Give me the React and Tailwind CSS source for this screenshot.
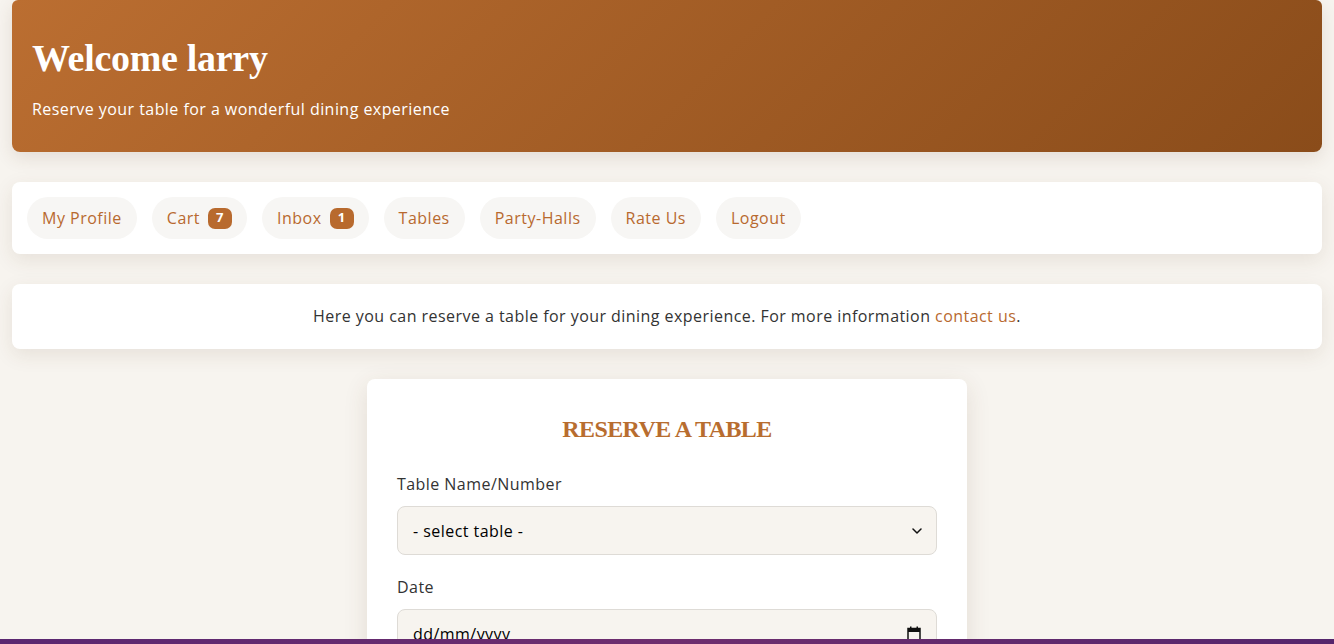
import React from 'react';

const NAV = [
  { label: 'My Profile' },
  { label: 'Cart', badge: 7 },
  { label: 'Inbox', badge: 1 },
  { label: 'Tables' },
  { label: 'Party-Halls' },
  { label: 'Rate Us' },
  { label: 'Logout' },
];

const sans = { fontFamily: '"Open Sans", "Liberation Sans", sans-serif' };
const serif = { fontFamily: '"Liberation Serif", "DejaVu Serif", serif' };

function CalendarIcon() {
  return (
    <svg width="14" height="16" viewBox="0 0 14 16" fill="none">
      <rect x="1" y="2.5" width="12" height="12.5" stroke="#111" strokeWidth="1.5" />
      <rect x="1" y="2.5" width="12" height="3.5" fill="#111" />
      <rect x="3" y="0.5" width="1.5" height="3" fill="#111" />
      <rect x="9.5" y="0.5" width="1.5" height="3" fill="#111" />
    </svg>
  );
}

export default function App() {
  return (
    <div className="min-h-screen bg-[#f7f4ef] px-3 pb-10 tracking-[0.45px]" style={sans}>
      <div className="flex flex-col gap-[30px]">
        {/* Welcome banner */}
        <header className="rounded-b-lg rounded-t-md bg-linear-135 from-[#bb6e31] to-[#8a4c1a] px-5 pt-[36px] pb-[31px] shadow-[0_6px_18px_rgba(90,60,30,0.12)]">
          <h1 className="text-[38px] leading-[45px] font-bold tracking-[-0.3px] text-white" style={serif}>
            Welcome larry
          </h1>
          <p className="mt-[16px] text-[16px] leading-6 text-white">
            Reserve your table for a wonderful dining experience
          </p>
        </header>

        {/* Navigation */}
        <nav className="flex flex-wrap gap-[15px] rounded-lg bg-white p-[15px] shadow-[0_6px_20px_rgba(90,60,30,0.10)]">
          {NAV.map((item) => (
            <button
              key={item.label}
              type="button"
              className="flex h-[42px] items-center rounded-full bg-[#f7f6f4] px-[15px] text-[16px] tracking-[0.5px] text-[#b8692f]"
              style={sans}
            >
              {item.label}
              {item.badge && (
                <span className="ml-2 flex h-[21px] min-w-[24px] items-center justify-center rounded-[7px] bg-[#b86a2e] px-1.5 text-[13px] font-bold text-white">
                  {item.badge}
                </span>
              )}
            </button>
          ))}
        </nav>

        {/* Info */}
        <div className="rounded-lg bg-white px-5 py-[20px] text-center text-[16px] leading-[25px] text-[#333] shadow-[0_6px_20px_rgba(90,60,30,0.10)]">
          Here you can reserve a table for your dining experience. For more information{' '}
          <a href="#" className="text-[#b8692f]">contact us</a>.
        </div>

        {/* Reservation form */}
        <div className="mx-auto w-[600px] rounded-lg bg-white p-[30px] shadow-[0_6px_24px_rgba(90,60,30,0.12)]">
          <h2 className="text-center text-[24px] leading-[40px] font-bold uppercase tracking-[-0.6px] text-[#b86d2f]" style={serif}>
            Reserve a Table
          </h2>
          <label className="mt-[23px] block text-[16px] leading-6 font-medium text-[#333]">
            Table Name/Number
          </label>
          <div className="relative mt-[10px]">
            <select
              className="block h-[49px] w-full appearance-none rounded-lg border border-[#dedbd6] bg-[#f7f4ef] px-[15px] text-[16px] tracking-[0.45px] text-black"
              defaultValue=""
              style={sans}
            >
              <option value="">- select table -</option>
              <option>Table 1</option>
              <option>Table 2</option>
            </select>
            <svg
              className="pointer-events-none absolute right-[15px] top-1/2 -translate-y-1/2"
              width="10"
              height="6"
              viewBox="0 0 10 6"
              fill="none"
            >
              <path d="M1 1l4 4 4-4" stroke="#111" strokeWidth="1.5" strokeLinecap="round" strokeLinejoin="round" />
            </svg>
          </div>
          <label className="mt-[20px] block text-[16px] leading-6 font-medium text-[#333]">
            Date
          </label>
          <div className="mt-[10px] flex h-[49px] items-center justify-between rounded-lg border border-[#dedbd6] bg-[#f7f4ef] px-[15px] text-[16px] text-black">
            <span>dd/mm/yyyy</span>
            <CalendarIcon />
          </div>
          <label className="mt-[20px] block text-[16px] leading-6 font-medium text-[#333]">
            Time
          </label>
          <div className="mt-[10px] h-[49px] rounded-lg border border-[#dedbd6] bg-[#f7f4ef]" />
        </div>
      </div>

      {/* Footer strip */}
      <div className="fixed inset-x-0 bottom-0 h-[5px] bg-linear-to-r from-[#5a2670] via-[#6e2d6e] to-[#55256c]" />
    </div>
  );
}
